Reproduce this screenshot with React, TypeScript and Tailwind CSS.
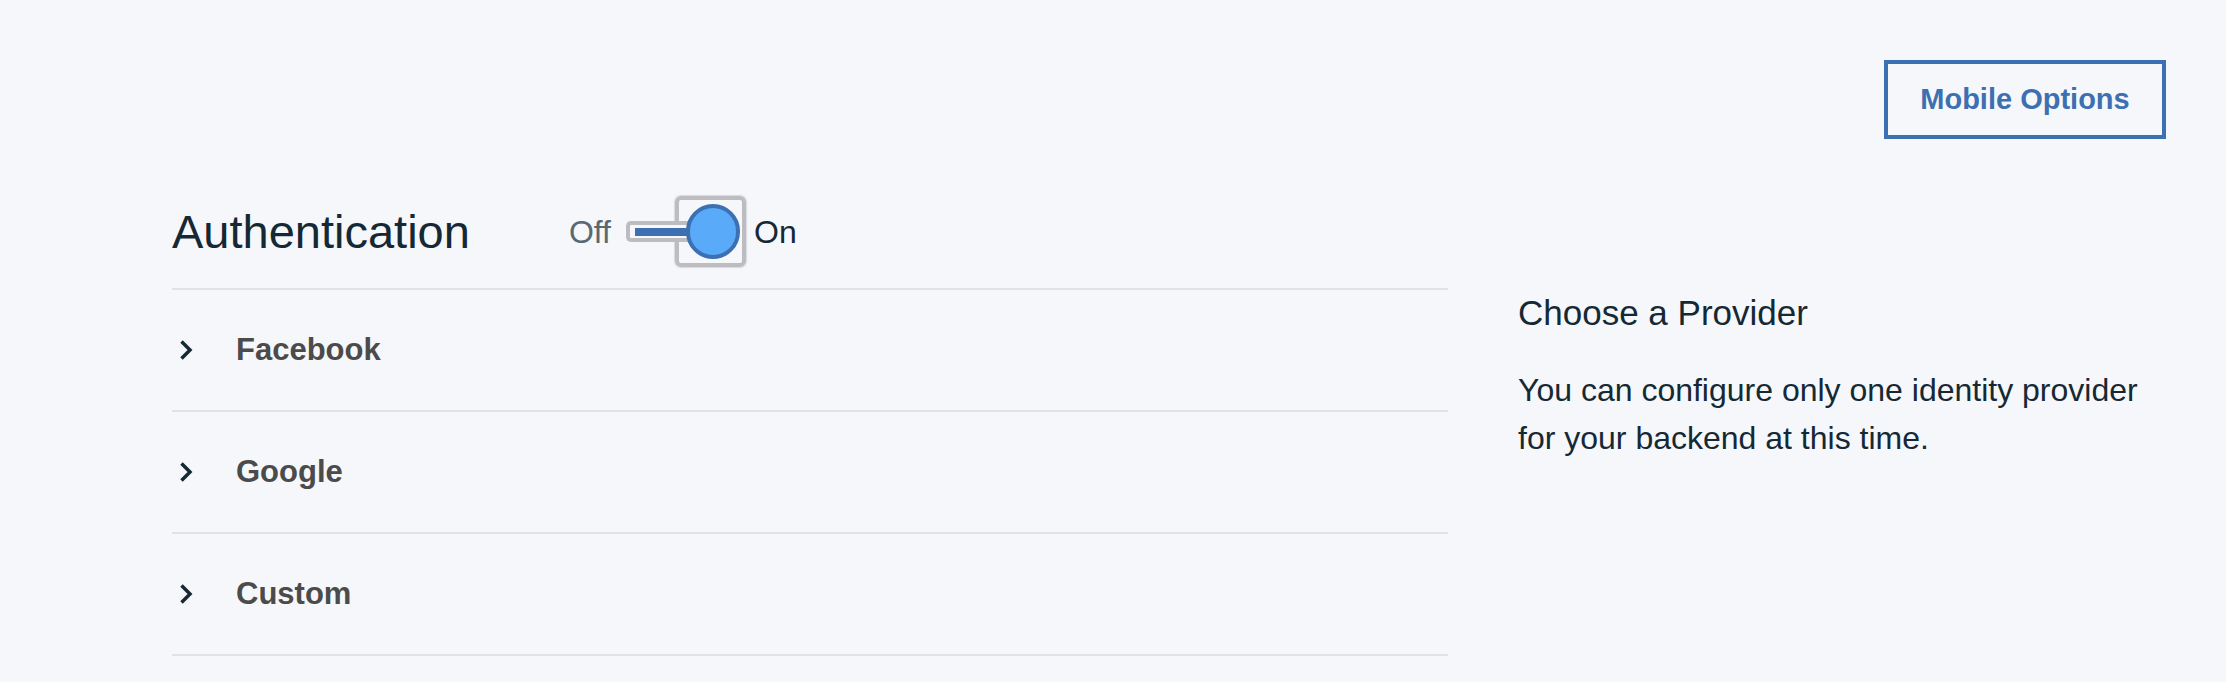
import { ReactNode } from "react";

const providers = ["Facebook", "Google", "Custom"];

const Chevron = () => (
  <svg width="16" height="24" viewBox="0 0 16 24" fill="none" className="ml-[6px] shrink-0">
    <path d="M3.5 3.5 L12 12 L3.5 20.5" stroke="#152935" strokeWidth="3.5" />
  </svg>
);

const Toggle = () => (
  <div className="relative ml-[15px] h-[71px] w-[120px] shrink-0">
    {/* focus ring around thumb */}
    <div className="absolute left-[49px] top-0 h-[71px] w-[71px] rounded-[6px] border-4 border-[#bcbcc1] shadow-[0_0_1px_1px_rgba(190,190,195,0.5)]" />
    {/* track */}
    <div className="absolute left-0 top-[25px] h-[21px] w-[62px] rounded-l-[5px] border-4 border-r-0 border-[#bcbcc1] bg-[#f5f7fa]" />
    <div className="absolute left-[9px] top-[32px] h-[8px] w-[70px] bg-[#3d70b2]" />
    {/* thumb */}
    <div className="absolute left-[60px] top-[8px] h-[55px] w-[54px] rounded-full border-4 border-[#3d70b2] bg-[#5aaafa]" />
  </div>
);

const ProviderRow = ({ children }: { children: ReactNode }) => (
  <div className="flex h-[122px] items-center border-b-2 border-[#dfe3e6]">
    <Chevron />
    <span className="ml-[42px] text-[31px] font-bold text-[#4b4b4b]">{children}</span>
  </div>
);

const App = () => {
  return (
    <div className="min-h-[682px] w-full bg-[#f5f7fa] font-['Liberation_Sans',Arial,sans-serif] text-[#152935]">
      <div className="flex justify-end pr-[60px] pt-[60px]">
        <button className="flex h-[79px] w-[282px] items-center justify-center border-4 border-[#3d70b2] text-[29px] font-bold text-[#3d70b2]">
          Mobile Options
        </button>
      </div>

      <div className="flex pl-[172px] pt-[57px]">
        <div className="w-[1276px] shrink-0">
          <div className="border-b-2 border-[#dfe3e6] pb-[21px]">
            <div className="flex h-[71px] items-center">
              <h1 className="text-[47px] leading-[47px] font-normal">Authentication</h1>
              <span className="ml-[99px] text-[32px] leading-[32px] text-[#5a6872]">Off</span>
              <Toggle />
              <span className="ml-[8px] text-[32px] leading-[32px]">On</span>
            </div>
          </div>
          {providers.map((p) => (
            <ProviderRow key={p}>{p}</ProviderRow>
          ))}
        </div>

        <div className="ml-[70px] w-[640px] pt-[97px]">
          <h2 className="text-[35px] leading-[40px]">Choose a Provider</h2>
          <p className="mt-[33px] text-[32px] leading-[48px]">
            You can configure only one identity provider for your backend at this time.
          </p>
        </div>
      </div>
    </div>
  );
};

export default App;
